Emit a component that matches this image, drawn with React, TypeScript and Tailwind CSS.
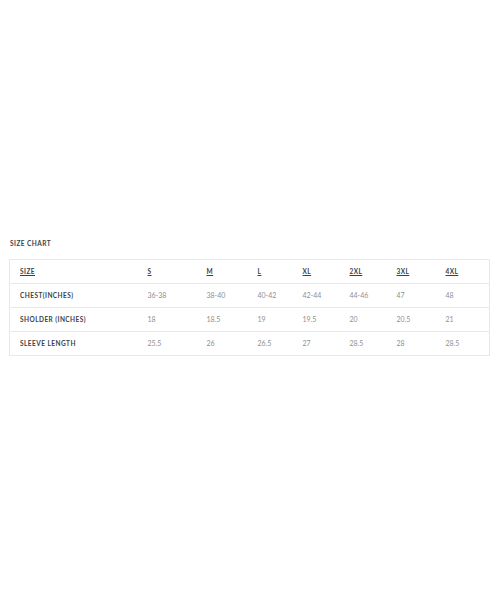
const sizes = ['S', 'M', 'L', 'XL', '2XL', '3XL', '4XL'];

const rows = [
  { label: 'CHEST(INCHES)', values: ['36-38', '38-40', '40-42', '42-44', '44-46', '47', '48'] },
  { label: 'SHOLDER (INCHES)', values: ['18', '18.5', '19', '19.5', '20', '20.5', '21'] },
  { label: 'SLEEVE LENGTH', values: ['25.5', '26', '26.5', '27', '28.5', '28', '28.5'] },
];

const colWidths = ['w-[128px]', 'w-[59px]', 'w-[51px]', 'w-[45px]', 'w-[47px]', 'w-[47px]', 'w-[49px]', 'w-[54px]'];

export default function App() {
  return (
    <div className="w-[500px] h-[600px] bg-white pt-[239px] font-['Lato',sans-serif] text-[#3d4248]">
      <div className="pl-[10px] h-[20px] text-[6.5px] font-bold tracking-[0.07em] leading-[9px]">
        SIZE CHART
      </div>
      <table className="ml-[9px] w-[481px] table-fixed border-collapse border border-[#e8e8e8]">
        <colgroup>
          {colWidths.map((w, i) => (
            <col key={i} className={w} />
          ))}
        </colgroup>
        <thead>
          <tr className="h-[24px]">
            <th className="pl-[10px] text-left text-[6.5px] font-bold tracking-[0.07em] underline underline-offset-1">SIZE</th>
            {sizes.map((s) => (
              <th key={s} className="pl-[10px] text-left text-[6.5px] font-bold tracking-[0.07em] underline underline-offset-1">
                {s}
              </th>
            ))}
          </tr>
        </thead>
        <tbody>
          {rows.map((row) => (
            <tr key={row.label} className="h-[24px] border-t border-[#e8e8e8]">
              <td className="pl-[10px] text-[6.5px] font-bold tracking-[0.07em]">{row.label}</td>
              {row.values.map((v, i) => (
                <td key={i} className="pl-[10px] text-[7px] text-[#8f8f8f]">
                  {v}
                </td>
              ))}
            </tr>
          ))}
        </tbody>
      </table>
    </div>
  );
}
